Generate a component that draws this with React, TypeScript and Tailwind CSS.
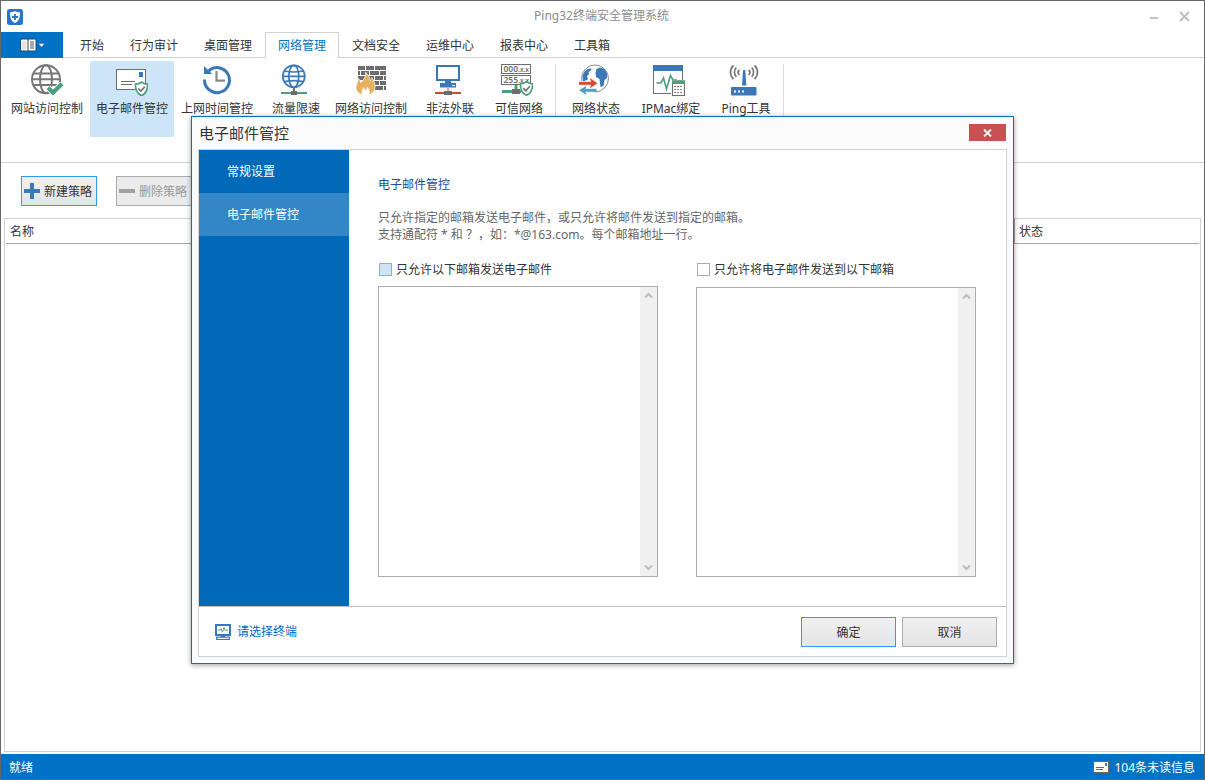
import type { ReactNode } from 'react';

const GREY = '#6d6d6d';
const BLUE = '#3a78b8';
const GREEN = '#4a9f7c';

function Icon({ children }: { children: ReactNode }) {
  return (
    <svg width="32" height="32" viewBox="0 0 32 32" fill="none" className="block">
      {children}
    </svg>
  );
}

/** Small shield with a tick, drawn over the lower right corner of an icon. */
function ShieldBadge({ x, y }: { x: number; y: number }) {
  return (
    <g transform={`translate(${x} ${y})`}>
      <path
        d="M6.5 0.4C8.5 2 10.3 2.4 12.6 2.4C12.6 8 11.2 12 6.5 14C1.8 12 0.4 8 0.4 2.4C2.7 2.4 4.5 2 6.5 0.4Z"
        fill="#fff"
        stroke={GREEN}
        strokeWidth="1.6"
      />
      <path d="M3.4 6.8L5.8 9.4L9.8 5" stroke={GREY} strokeWidth="1.6" />
    </g>
  );
}

function GlobeCheckIcon() {
  return (
    <Icon>
      <g stroke="#777" strokeWidth="2">
        <circle cx="15" cy="15.3" r="14" />
        <ellipse cx="15" cy="15.3" rx="6" ry="14" />
        <path d="M1 15.3H29M3 9.5H27M3 21H27" />
      </g>
      <path d="M17 23.8L22 28.5L31 19.8" stroke="#fff" strokeWidth="6" />
      <path d="M17 23.8L22 28.5L31 19.8" stroke={GREEN} strokeWidth="4.2" />
    </Icon>
  );
}

function MailShieldIcon() {
  return (
    <Icon>
      <rect x="0.5" y="5.5" width="29" height="20" fill="#fff" stroke={GREY} />
      <rect x="23" y="8" width="4" height="5" fill={BLUE} />
      <path d="M5 17.5H19M5 20.5H16" stroke={GREY} />
      <ShieldBadge x={19} y={17.7} />
    </Icon>
  );
}

function HistoryIcon() {
  return (
    <Icon>
      <path d="M3.5 15.5A12.5 12.5 0 1 0 9 5.8" stroke={BLUE} strokeWidth="3" />
      <path d="M3 2V10H11.2Z" fill={BLUE} />
      <path d="M6 8.5L9.5 5.5" stroke={BLUE} strokeWidth="3" />
      <path d="M15.5 7V16.6H24" stroke="#8a8a8a" strokeWidth="2.2" />
    </Icon>
  );
}

function GlobeLineIcon() {
  return (
    <Icon>
      <g stroke={BLUE} strokeWidth="1.7">
        <circle cx="15.8" cy="12.3" r="11" />
        <ellipse cx="15.8" cy="12.3" rx="5" ry="11" />
        <path d="M4.8 12.3H26.8M6.5 7C12 8.2 19.5 8.2 25 7M6.5 17.6C12 16.4 19.5 16.4 25 17.6" />
      </g>
      <path d="M3 29H29" stroke={GREEN} strokeWidth="2" />
      <path d="M13 27H15V24H17V27H19V31H13Z" fill={GREY} />
    </Icon>
  );
}

function FirewallIcon() {
  return (
    <Icon>
      <path
        d="M3 2H10V6H3ZM11 2H19V6H11ZM20 2H31V6H20ZM3 7H5V11H3ZM6 7H14V11H6ZM15 7H24V11H15ZM25 7H31V11H25ZM3 12H10V16H3ZM11 12H19V16H11ZM20 12H28V16H20ZM29 12H31V16H29ZM15 17H24V21H15ZM25 17H31V21H25ZM18 22H28V26H18ZM29 22H31V26H29Z"
        fill={GREY}
      />
      <path
        d="M10.5 8C12.5 11 15 13 15.3 17C16.5 16 16.8 15 16.7 13.6C19 17 20.5 20 20 24C19.5 28 16.5 30.5 13 30.8C15.3 28.8 14.3 25.5 12.3 23C12.3 25 11 26 10.2 27C9.4 26 9 25 9 23.5C7 26 6.2 28.5 8 30.8C3.5 30 .8 27 1 23C1.1 20 3 18 3.5 14.5C5 16 5.5 17 5.7 18.5C9 16 11 12 10.5 8Z"
        fill="#e6b15f"
        stroke="#fff"
        strokeWidth="0.7"
      />
    </Icon>
  );
}

function OutreachIcon() {
  return (
    <Icon>
      <rect x="5" y="2" width="22" height="14" stroke={BLUE} strokeWidth="2" />
      <path d="M13 17H19V19H13Z" fill={BLUE} />
      <path d="M8 19H24V23.5H8Z" fill={BLUE} />
      <path d="M20 21.5H23" stroke="#fff" />
      <path d="M3 29H29" stroke="#cb4b30" strokeWidth="2" />
      <path d="M16 24V27" stroke="#cb4b30" />
      <path d="M12 27H20V31H12Z" fill={GREY} />
    </Icon>
  );
}

function TrustedIcon() {
  return (
    <Icon>
      <rect x="0.5" y="0.5" width="29" height="9" stroke={GREY} />
      <rect x="0.5" y="11.5" width="29" height="9" stroke={GREY} />
      <g fill={GREY} fontFamily="Noto Sans" fontSize="8.5" fontWeight="600">
        <text x="2.5" y="8.2">
          000<tspan fontSize="6.5">.x.x</tspan>
        </text>
        <text x="2.5" y="19.2">
          255<tspan fontSize="6.5">.x.x</tspan>
        </text>
      </g>
      <path d="M1 27.5H20" stroke={GREEN} strokeWidth="3" />
      <path d="M15 21V26" stroke={GREEN} strokeWidth="3" />
      <path d="M11 25H19V30H11Z" fill={GREY} />
      <ShieldBadge x={19} y={17.3} />
    </Icon>
  );
}

function NetStatusIcon() {
  return (
    <Icon>
      <circle cx="17" cy="14.5" r="13.5" fill="#fff" stroke="#8a8a8a" />
      <path d="M4.5 13C5.5 8 8 4.5 13 4.5L13.5 6L10.5 8L11 10.5L9 12L10 15.5L5 17.5Z" fill={BLUE} />
      <path d="M18.5 5L22 3.5L26.5 5L29 9.5L29 14L26.5 16L25.5 22L22.5 23L21.5 15L18 13L17.5 9Z" fill={BLUE} />
      <path d="M0 17H17V30H0Z" fill="#fff" />
      <path d="M1 19.3H15" stroke="#d24d31" strokeWidth="3" />
      <path d="M12 14L19.5 19.3L12 24.3L13.5 19.3Z" fill="#d24d31" />
      <path d="M18.5 26.3H4" stroke="#529fc4" strokeWidth="3" />
      <path d="M8.5 21.8L1 26.3L8.5 31L7 26.3Z" fill="#529fc4" />
    </Icon>
  );
}

function IpMacIcon() {
  return (
    <Icon>
      <rect x="0.5" y="1.5" width="29" height="28" fill="#fff" stroke={GREY} />
      <rect x="0" y="1" width="30" height="6" fill={BLUE} />
      <path d="M3.5 19H8L10.5 14L13.5 25L17.5 11.5L20 16H24" stroke={GREEN} strokeWidth="1.6" />
      <rect x="18" y="16" width="14" height="16" fill="#fff" />
      <rect x="19.5" y="17" width="12" height="14.5" fill="#fff" stroke={GREY} />
      <path d="M19 16.5H32V20H19Z" fill={GREEN} />
      <path d="M21 22.5H30M21 25.5H30M21 28.5H30" stroke="#8a8a8a" strokeDasharray="2 1" />
    </Icon>
  );
}

function PingIcon() {
  return (
    <Icon>
      <g stroke="#777" strokeWidth="1.7">
        <path d="M5.5 1.5C1.5 5 1.5 11.5 5.5 15M8.3 3.7C5.8 6.3 5.8 10.3 8.3 12.9M11.2 5.8C9.8 7.3 9.8 9.3 11.2 10.8" />
        <path d="M26.5 1.5C30.5 5 30.5 11.5 26.5 15M23.7 3.7C26.2 6.3 26.2 10.3 23.7 12.9M20.8 5.8C22.2 7.3 22.2 9.3 20.8 10.8" />
      </g>
      <path d="M15 6H17.3L18.3 21.5H14Z" fill={BLUE} />
      <rect x="3" y="23" width="25.5" height="8.5" rx="1" fill={BLUE} />
      <path d="M6 27.5H8M10 27.5H12M14 27.5H16" stroke="#fff" strokeWidth="2" />
    </Icon>
  );
}

const TABS = ['开始', '行为审计', '桌面管理', '网络管理', '文档安全', '运维中心', '报表中心', '工具箱'];

type RibbonEntry = {
  label: string;
  icon: ReactNode;
  size: string;
  active?: boolean;
};

const POLICY_TOOLS: RibbonEntry[] = [
  { label: '网站访问控制', icon: <GlobeCheckIcon />, size: 'w-[84px]' },
  { label: '电子邮件管控', icon: <MailShieldIcon />, size: 'w-[84px]', active: true },
  { label: '上网时间管控', icon: <HistoryIcon />, size: 'w-[84px]' },
  { label: '流量限速', icon: <GlobeLineIcon />, size: 'w-[68px]' },
  { label: '网络访问控制', icon: <FirewallIcon />, size: 'w-[84px]' },
  { label: '非法外联', icon: <OutreachIcon />, size: 'w-[68px]' },
  { label: '可信网络', icon: <TrustedIcon />, size: 'w-[68px]' },
];

const STATUS_TOOLS: RibbonEntry[] = [
  { label: '网络状态', icon: <NetStatusIcon />, size: 'w-[68px]' },
  { label: 'IPMac绑定', icon: <IpMacIcon />, size: 'w-[80px]' },
  { label: 'Ping工具', icon: <PingIcon />, size: 'w-[68px]' },
];

function RibbonItem({ label, icon, size, active }: RibbonEntry) {
  return (
    <div
      className={`flex h-[76px] flex-col items-center pt-[3px] ${size} ${active ? 'bg-[#cde6f7]' : ''}`}
    >
      {icon}
      <span className={`mt-[5px] leading-4 whitespace-nowrap ${size === 'w-[84px]' ? '' : 'pl-1'}`}>
        {label}
      </span>
    </div>
  );
}

function TitleBar() {
  return (
    <header className="flex h-[31px] shrink-0 items-center pr-[14px] pb-px pl-[6px]">
      <svg width="16" height="16" viewBox="0 0 16 16" className="mt-px shrink-0">
        <rect width="16" height="16" rx="2.5" fill="#2b74cc" />
        <path d="M8 2C9.8 3 11.4 3.4 13 3.4C13 8.6 12 11.8 8 14C4 11.8 3 8.6 3 3.4C4.6 3.4 6.2 3 8 2Z" fill="#fff" />
        <path d="M8 5V11M5 8H11" stroke="#2b74cc" strokeWidth="1.8" />
      </svg>
      <h1 className="flex-1 pl-[30px] text-center text-[#8c8c8c]">Ping32终端安全管理系统</h1>
      <svg width="40" height="12" viewBox="0 0 40 12" fill="none" stroke="#c0c0c0" strokeWidth="2.2">
        <path d="M0 8H8M30 2L39 11M39 2L30 11" />
      </svg>
    </header>
  );
}

function TabStrip() {
  return (
    <nav className="flex h-[26px] shrink-0">
      <button className="flex w-[62px] items-center gap-px bg-[#0072c6] pl-[19px]">
        <svg width="17" height="14" viewBox="0 0 17 14">
          <rect x="0.5" y="1" width="15.5" height="12" rx="1.5" fill="#fff" stroke="#1c4a78" />
          <path d="M8 1V13" stroke="#444" />
          <rect x="2" y="3" width="4.5" height="8" fill="#e3e3e3" />
          <path d="M10 4H14M10 6H14M10 8H14M10 10H14" stroke="#555" />
        </svg>
        <svg width="7" height="5" viewBox="0 0 7 5">
          <path d="M0.3 0.5H6.7L3.5 4.2Z" fill="#fff" stroke="#1c4a78" strokeWidth="0.4" />
        </svg>
      </button>
      <div className="w-1 border-b border-[#d2d2d2]" />
      {TABS.map((tab) =>
        tab === '网络管理' ? (
          <span key={tab} className="border border-b-0 border-[#d2d2d2] px-3 leading-[25px] text-[#0072c6]">
            {tab}
          </span>
        ) : (
          <span key={tab} className="border-b border-[#d2d2d2] px-[13px] leading-[27px]">
            {tab}
          </span>
        ),
      )}
      <div className="flex-1 border-b border-[#d2d2d2]" />
    </nav>
  );
}

function Ribbon() {
  return (
    <section className="flex h-[105px] shrink-0 gap-px border-b border-[#d2d2d2] pt-[3px] pl-1">
      {POLICY_TOOLS.map((item) => (
        <RibbonItem key={item.label} {...item} />
      ))}
      <div className="mx-[3px] mt-[3px] h-[90px] w-px bg-[#dcdcdc]" />
      {STATUS_TOOLS.map((item) => (
        <RibbonItem key={item.label} {...item} />
      ))}
      <div className="mt-[3px] ml-1 h-[90px] w-px bg-[#dcdcdc]" />
    </section>
  );
}

function PolicyTable() {
  return (
    <section className="mx-[3px] mb-0.5 flex-1 border border-[#d0d0d0] px-px">
      <div className="flex h-[25px] border-b border-[#a6a6a6] leading-[25px]">
        <span className="w-[1009px] border-r border-[#a6a6a6] pl-[4px]">名称</span>
        <span className="pl-1">状态</span>
      </div>
    </section>
  );
}

function StatusBar() {
  return (
    <footer className="flex h-[25px] shrink-0 items-center justify-between bg-[#0072c6] pr-[9px] pl-2 text-white">
      <span className="pt-[3px]">就绪</span>
      <span className="flex items-center gap-[5px] pt-[3px]">
        <svg width="16" height="12" viewBox="0 0 16 12" className="-mt-0.5">
          <rect x="0.5" y="0.5" width="15" height="11" fill="#fff" stroke="#666" />
          <path d="M3 6.5H11M3 8.5H10" stroke="#666" />
          <path d="M12 2H14V5H12Z" fill={BLUE} />
        </svg>
        104条未读信息
      </span>
    </footer>
  );
}

function Chevron({ flip }: { flip?: boolean }) {
  return (
    <svg width="9" height="7" viewBox="0 0 9 7" fill="none" className={flip ? 'rotate-180' : ''}>
      <path d="M1 5.5L4.5 2L8 5.5" stroke="#bfbfbf" strokeWidth="2" />
    </svg>
  );
}

function AddressList({ label, hot }: { label: string; hot?: boolean }) {
  return (
    <div className="flex w-[280px] flex-col">
      <label className="flex h-4 items-center gap-1 pl-px">
        <span
          className={`size-[13px] border ${hot ? 'border-[#7eb4ea] bg-[#cde6f7]' : 'border-[#ababab] bg-white'}`}
        />
        <span className="pt-0.5">{label}</span>
      </label>
      <div
        className={`flex justify-end border border-[#ababab] bg-white ${hot ? 'mt-[9px] h-[291px]' : 'mt-2.5 h-[290px]'}`}
      >
        <div className="flex w-[17px] flex-col items-center justify-between bg-[#f0f0f0] py-[5px]">
          <Chevron />
          <Chevron flip />
        </div>
      </div>
    </div>
  );
}

function DialogButton({ label, primary }: { label: string; primary?: boolean }) {
  return (
    <button
      className={`h-[30px] w-[95px] border bg-linear-to-b from-[#f0f0f0] to-[#e4e4e4] pt-0.5 ${primary ? 'border-[#3399ff]' : 'border-[#ababab]'}`}
    >
      {label}
    </button>
  );
}

function EmailDialog() {
  return (
    <div
      role="dialog"
      aria-label="电子邮件管控"
      className="absolute top-[115px] left-[190px] flex h-[548px] w-[823px] flex-col border border-[#0072c6] bg-[#fbfbfb] px-1.5 pb-1.5 shadow-[0_1px_5px_rgba(0,0,0,0.4)]"
    >
      <div className="flex h-8 shrink-0 items-start justify-between pr-px pl-px">
        <h2 className="text-[15px] leading-[33px]">电子邮件管控</h2>
        <button className="mt-[7px] flex h-[17px] w-[37px] items-center justify-center bg-[#c75050]">
          <svg width="9" height="8" viewBox="0 0 9 8" fill="none">
            <path d="M1 0.5L8 7.5M8 0.5L1 7.5" stroke="#fff" strokeWidth="1.8" />
          </svg>
        </button>
      </div>
      <div className="flex flex-1 flex-col border border-[#d2d2d2] bg-white">
        <div className="flex h-[457px] border-b border-[#bdbdc1]">
          <aside className="w-[150px] bg-[#0069b8] text-white">
            <div className="h-[43px] pl-7 leading-[43px]">常规设置</div>
            <div className="h-[43px] bg-[#3387c6] pl-7 leading-[43px]">电子邮件管控</div>
          </aside>
          <main className="flex-1 pt-[26px] pl-[29px]">
            <h3 className="leading-[18px] text-[#1e4e95]">电子邮件管控</h3>
            <p className="mt-[15px] leading-[17px] text-[#666]">
              只允许指定的邮箱发送电子邮件，或只允许将邮件发送到指定的邮箱。
              <br />
              支持通配符 * 和 ？，如：*@163.com。每个邮箱地址一行。
            </p>
            <div className="mt-[18px] flex gap-[38px]">
              <AddressList label="只允许以下邮箱发送电子邮件" hot />
              <AddressList label="只允许将电子邮件发送到以下邮箱" />
            </div>
          </main>
        </div>
        <div className="flex flex-1 items-center justify-between pr-[9px] pl-4">
          <a className="flex items-center gap-1.5 text-[#0066cc]">
            <svg width="16" height="16" viewBox="0 0 16 16" fill="none">
              <rect x="1" y="1" width="14" height="10" fill="#fff" stroke={BLUE} strokeWidth="2" />
              <path d="M3 6H5L6 4.5L7.5 8L9 3.5L10.5 7L11.5 6H13" stroke={GREEN} />
              <path d="M6 12.5H10" stroke={BLUE} />
              <rect x="1.7" y="13.2" width="12.6" height="2.3" stroke={BLUE} strokeWidth="1.2" />
            </svg>
            请选择终端
          </a>
          <div className="flex gap-1.5">
            <DialogButton label="确定" primary />
            <DialogButton label="取消" />
          </div>
        </div>
      </div>
    </div>
  );
}

export default function App() {
  return (
    <div className="relative flex h-[780px] w-[1205px] flex-col overflow-hidden border border-[#666] bg-white font-['Noto_Sans','Noto_Sans_CJK_SC',sans-serif] text-xs text-[#333]">
      <TitleBar />
      <TabStrip />
      <Ribbon />
      <div className="flex h-[55px] shrink-0 gap-[19px] pt-[13px] pl-5">
        <button className="flex h-[30px] w-[76px] items-center gap-1 border border-[#3399ff] bg-linear-to-b from-[#f0f0f0] to-[#e4e4e4] pl-0.5">
          <svg width="16" height="16" viewBox="0 0 16 16">
            <path d="M8 0V16M0 8H16" stroke={BLUE} strokeWidth="4" />
          </svg>
          <span className="pt-0.5 whitespace-nowrap">新建策略</span>
        </button>
        <button className="flex h-[30px] w-[76px] items-center gap-1 border border-[#ababab] bg-[#ebebeb] pl-0.5 text-[#9a9a9a]">
          <svg width="16" height="16" viewBox="0 0 16 16">
            <path d="M0 8H16" stroke="#a0a0a0" strokeWidth="4" />
          </svg>
          <span className="pt-0.5 whitespace-nowrap">删除策略</span>
        </button>
      </div>
      <PolicyTable />
      <StatusBar />
      <EmailDialog />
    </div>
  );
}
